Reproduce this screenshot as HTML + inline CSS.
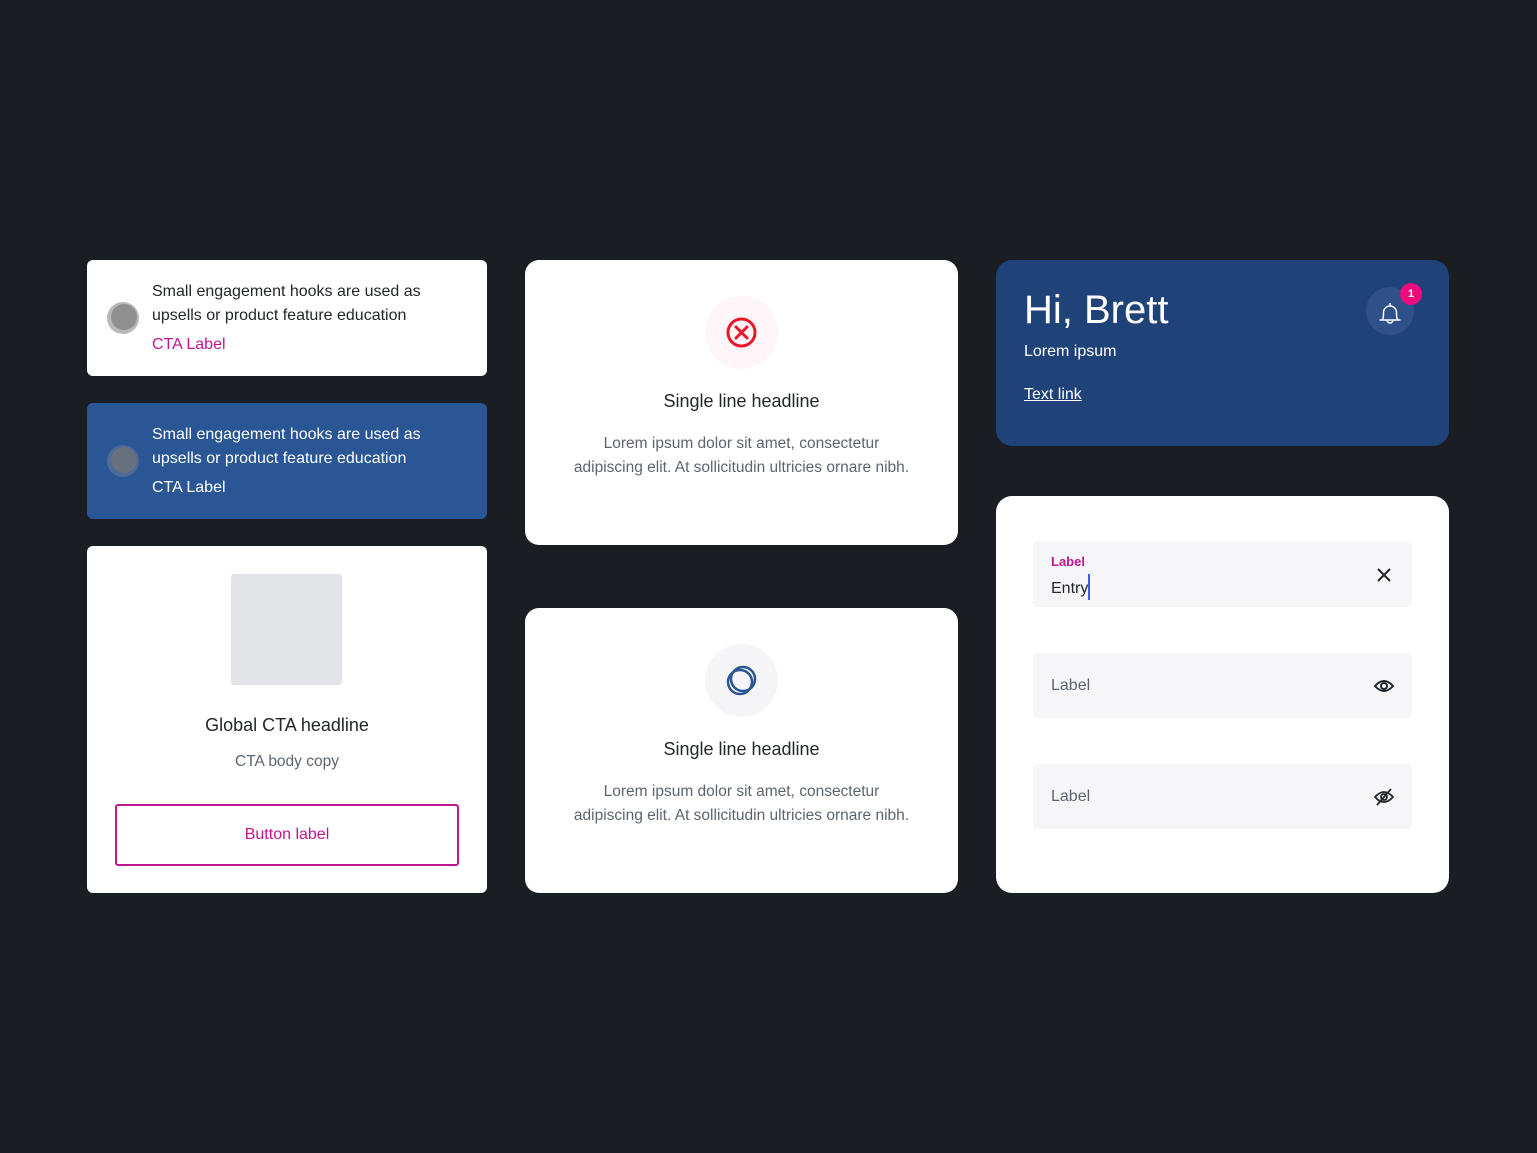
<!DOCTYPE html>
<html><head><style>
*{box-sizing:border-box;margin:0;padding:0}
body{width:1537px;height:1153px;background:#1a1d21;font-family:"Liberation Sans",Arial,sans-serif;position:relative;overflow:hidden}
.c{position:absolute;background:#fff}
.hook{left:87px;width:400px;height:116px;border-radius:6px}
.dot{position:absolute;left:20px;top:42px;width:32px;height:32px;border-radius:50%;background:#b8b8b8}
.dot::after{content:"";position:absolute;left:4px;top:2px;width:26px;height:26px;border-radius:50%;background:#8f8f8f}
.blue .dot::after{background:#66707f}
.ht{position:absolute;left:65px;top:20px;font-size:16px;line-height:24px;color:#23262b}
.cta{position:absolute;left:65px;top:76px;font-size:16px;color:#c0168e}
.mid{left:525px;width:433px;height:285px;border-radius:14px;text-align:center}
.circ{position:absolute;left:180px;top:36px;width:73px;height:73px;border-radius:50%}
.h{position:absolute;left:0;right:0;top:131px;font-size:18px;color:#23262b}
.p{position:absolute;left:0;right:0;top:172px;font-size:15.5px;line-height:24px;color:#5d6470}
.f{position:absolute;left:37px;width:379px;height:65px;background:#f6f6f8;border-radius:4px}
.f .l{position:absolute;left:18px;top:24px;font-size:16px;color:#5d6470}
</style></head><body>
<div class="c hook" style="top:260px"><div class="dot"></div><div class="ht">Small engagement hooks are used as<br>upsells or product feature education</div><div class="cta">CTA Label</div></div>
<div class="c hook blue" style="top:403px;background:#2a5696"><div class="dot" style="background:#4d6a94"></div><div class="ht" style="color:#fff">Small engagement hooks are used as<br>upsells or product feature education</div><div class="cta" style="color:#fff">CTA Label</div></div>
<div class="c" style="left:87px;top:546px;width:400px;height:347px;border-radius:6px;text-align:center">
<div style="position:absolute;left:144px;top:28px;width:111px;height:111px;background:#e3e4e8;border-radius:3px"></div>
<div style="position:absolute;left:0;right:0;top:169px;font-size:18px;color:#23262b">Global CTA headline</div>
<div style="position:absolute;left:0;right:0;top:207px;font-size:15.5px;color:#5d6470">CTA body copy</div>
<div style="position:absolute;left:28px;top:258px;width:344px;height:62px;border:2px solid #c0168e;border-radius:3px;color:#c0168e;font-size:16px;line-height:58px">Button label</div>
</div>
<div class="c mid" style="top:260px"><div class="circ" style="background:#fdf5f8"><svg width="73" height="73" viewBox="0 0 73 73"><circle cx="36.5" cy="36.5" r="13.5" fill="none" stroke="#e8172b" stroke-width="3"/><path d="M31 31l11 11M42 31l-11 11" stroke="#e8172b" stroke-width="3" stroke-linecap="round"/></svg></div>
<div class="h">Single line headline</div><div class="p">Lorem ipsum dolor sit amet, consectetur<br>adipiscing elit. At sollicitudin ultricies ornare nibh.</div></div>
<div class="c mid" style="top:608px"><div class="circ" style="background:#f5f5f8"><svg width="73" height="73" viewBox="0 0 73 73"><circle cx="35" cy="38" r="12" fill="none" stroke="#2a5696" stroke-width="2.5"/><circle cx="38" cy="35" r="12" fill="none" stroke="#2a5696" stroke-width="2.5"/></svg></div>
<div class="h">Single line headline</div><div class="p">Lorem ipsum dolor sit amet, consectetur<br>adipiscing elit. At sollicitudin ultricies ornare nibh.</div></div>
<div class="c" style="left:996px;top:260px;width:453px;height:186px;border-radius:16px;background:#1f4279;color:#fff">
<div style="position:absolute;left:28px;top:28px;font-size:40px">Hi, Brett</div>
<div style="position:absolute;left:28px;top:83px;font-size:16px">Lorem ipsum</div>
<div style="position:absolute;left:28px;top:126px;font-size:16px;text-decoration:underline">Text link</div>
<div style="position:absolute;left:370px;top:27px;width:48px;height:48px;border-radius:50%;background:#2f5088"><svg width="48" height="48" viewBox="0 0 48 48"><path d="M13.5 33h21M16 33c1.5-2 1.5-4 1.5-7.5a6.5 6.5 0 0 1 13 0c0 3.5 0 5.5 1.5 7.5M24 16v3M21 33a3 3 0 0 0 6 0" fill="none" stroke="#fff" stroke-width="1.5" stroke-linejoin="round"/></svg></div>
<div style="position:absolute;left:404px;top:23px;width:22px;height:22px;border-radius:50%;background:#ec0a7d;font-size:11px;font-weight:bold;text-align:center;line-height:22px">1</div>
</div>
<div class="c" style="left:996px;top:496px;width:453px;height:397px;border-radius:16px">
<div class="f" style="top:46px"><div style="position:absolute;left:18px;top:12px;font-size:13px;font-weight:bold;color:#c0168e">Label</div><div style="position:absolute;left:18px;top:32px;font-size:16px;color:#23262b">Entry<span style="display:inline-block;width:2px;height:26px;background:#3d5bf5;vertical-align:-7px"></span></div>
<svg style="position:absolute;left:342px;top:24px" width="18" height="18"><path d="M3 3l12 12M15 3L3 15" stroke="#23262b" stroke-width="2"/></svg></div>
<div class="f" style="top:157px"><div class="l">Label</div><svg style="position:absolute;left:340px;top:22px" width="22" height="22" viewBox="0 0 22 22"><path d="M2 11q9-10 18 0q-9 10-18 0z" fill="none" stroke="#23262b" stroke-width="2"/><circle cx="11" cy="11" r="3" fill="none" stroke="#23262b" stroke-width="2"/></svg></div>
<div class="f" style="top:268px"><div class="l">Label</div><svg style="position:absolute;left:340px;top:22px" width="22" height="22" viewBox="0 0 22 22"><path d="M2 11q9-10 18 0q-9 10-18 0z" fill="none" stroke="#23262b" stroke-width="1.8"/><circle cx="11" cy="11" r="3" fill="none" stroke="#23262b" stroke-width="1.8"/><path d="M18 3L4 19" stroke="#23262b" stroke-width="1.8"/></svg></div>
</div>
</body></html>
